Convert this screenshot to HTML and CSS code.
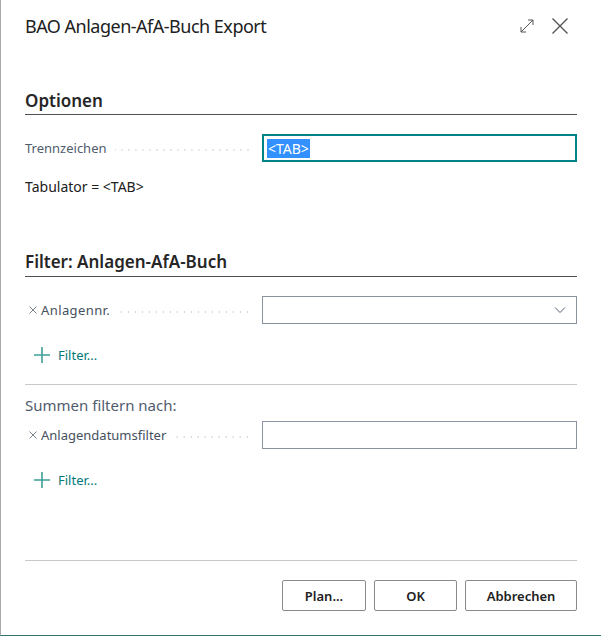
FILE: index.html
```html
<!DOCTYPE html>
<html lang="de">
<head>
<meta charset="utf-8">
<title>BAO Anlagen-AfA-Buch Export</title>
<link rel="stylesheet" href="styles.css">
</head>
<body>
<div class="dialog">
  <div class="header">
    <h1 class="title">BAO Anlagen-AfA-Buch Export</h1>
    <div class="header-actions">
      <svg class="icon-expand" width="16" height="16" viewBox="0 0 16 16">
        <path d="M2 14 L14 2 M9 2 H14 V7 M2 9 V14 H7" fill="none" stroke="#555" stroke-width="1"/>
      </svg>
      <svg class="icon-close" width="18" height="18" viewBox="0 0 18 18">
        <path d="M1.5 1.5 L16.5 16.5 M16.5 1.5 L1.5 16.5" fill="none" stroke="#555" stroke-width="1.4"/>
      </svg>
    </div>
  </div>

  <h2 class="section-heading first">Optionen</h2>
  <div class="field-row first-row">
    <div class="label"><span class="label-text">Trennzeichen</span><span class="leader"></span></div>
    <div class="input focused"><span class="selected">&lt;TAB&gt;</span></div>
  </div>
  <div class="note">Tabulator = &lt;TAB&gt;</div>

  <h2 class="section-heading second">Filter: Anlagen-AfA-Buch</h2>
  <div class="field-row first-row">
    <div class="label">
      <svg class="remove" width="8" height="8" viewBox="0 0 8 8"><path d="M0.5 0.5 L7.5 7.5 M7.5 0.5 L0.5 7.5" fill="none" stroke="#7a828c" stroke-width="1"/></svg>
      <span class="label-text dark wide">Anlagennr.</span><span class="leader"></span>
    </div>
    <div class="input">
      <svg class="chevron" width="12" height="8" viewBox="0 0 12 8"><path d="M1 1.5 L6 6.5 L11 1.5" fill="none" stroke="#505c6d" stroke-width="1"/></svg>
    </div>
  </div>
  <div class="add-filter">
    <svg class="plus" width="16" height="16" viewBox="0 0 16 16"><path d="M8 0 V16 M0 8 H16" fill="none" stroke="#3f9f9a" stroke-width="1.6"/></svg>
    <span>Filter...</span>
  </div>

  <div class="separator sep-mid"></div>
  <div class="sub-heading">Summen filtern nach:</div>
  <div class="field-row sum-row">
    <div class="label">
      <svg class="remove" width="8" height="8" viewBox="0 0 8 8"><path d="M0.5 0.5 L7.5 7.5 M7.5 0.5 L0.5 7.5" fill="none" stroke="#7a828c" stroke-width="1"/></svg>
      <span class="label-text dark">Anlagendatumsfilter</span><span class="leader"></span>
    </div>
    <div class="input"></div>
  </div>
  <div class="add-filter">
    <svg class="plus" width="16" height="16" viewBox="0 0 16 16"><path d="M8 0 V16 M0 8 H16" fill="none" stroke="#3f9f9a" stroke-width="1.6"/></svg>
    <span>Filter...</span>
  </div>

  <div class="separator sep-bottom"></div>
  <div class="footer">
    <button class="btn btn-plan">Plan...</button>
    <button class="btn btn-ok">OK</button>
    <button class="btn btn-cancel">Abbrechen</button>
  </div>
</div>
</body>
</html>
```
FILE: styles.css
```css
html, body {
  margin: 0;
  padding: 0;
  background: #ffffff;
}
body {
  font-family: "Noto Sans", "Open Sans", sans-serif;
  color: #212121;
  width: 601px;
  height: 637px;
  overflow: hidden;
}
.dialog {
  box-sizing: border-box;
  width: 601px;
  height: 636px;
  border-left: 1px solid #a7abab;
  border-bottom: 1px solid #2f7474;
  padding: 0 24px 0 24px;
  background: #ffffff;
}
.header {
  height: 52px;
  display: flex;
  align-items: center;
  justify-content: space-between;
}
.title {
  margin: 0;
  font-size: 18px;
  letter-spacing: -0.5px;
  font-weight: 400;
  line-height: 26px;
  color: #212121;
}
.header-actions {
  display: flex;
  align-items: center;
  gap: 16px;
  margin-right: 8px;
}
.icon-expand { display: block; }
.icon-close { display: block; }

.section-heading {
  margin: 0;
  font-size: 17px;
  font-weight: 600;
  line-height: 22px;
  color: #262626;
  border-bottom: 1px solid #505050;
}
.section-heading.first {
  margin-top: 38px;
  padding-bottom: 2px;
}
.section-heading.second {
  margin-top: 54px;
  padding-bottom: 3px;
}
.field-row {
  display: grid;
  grid-template-columns: 237px 1fr;
  align-items: center;
  height: 28px;
}
.first-row { margin-top: 19px; }
.sum-row { margin-top: 6px; }
.label {
  display: flex;
  align-items: center;
  font-size: 13px;
  color: #505c6d;
  padding-right: 11px;
  min-width: 0;
}
.label-text { white-space: nowrap; }
.label-text.dark { color: #45505d; }
.label-text.wide { letter-spacing: 0.4px; }
.remove {
  display: block;
  margin-left: 4px;
  margin-right: 4px;
  flex: none;
}
.leader {
  flex: 1;
  height: 2px;
  margin-left: 8px;
  margin-top: 3px;
  background-image: radial-gradient(circle, #cdd0d4 0.8px, transparent 1.1px);
  background-size: 7px 2px;
  background-repeat: repeat-x;
  background-position: right center;
}
.input {
  box-sizing: border-box;
  height: 28px;
  border: 1px solid #8a94a0;
  background: #fff;
  display: flex;
  align-items: center;
  justify-content: space-between;
  padding: 0 10px 0 4px;
}
.input.focused {
  border: 2px solid #008489;
  padding-left: 3px;
}
.selected {
  background: #3390ff;
  color: #ffffff;
  font-size: 14px;
  line-height: 19px;
  padding: 0 1px;
}
.chevron {
  margin-left: auto;
  display: block;
}
.note {
  margin-top: 15px;
  font-size: 14px;
  line-height: 20px;
  color: #212121;
}
.add-filter {
  margin-top: 21px;
  display: flex;
  align-items: center;
  gap: 8px;
  padding-left: 9px;
  height: 20px;
  font-size: 13px;
  color: #00787b;
}
.plus { display: block; }
.separator {
  height: 1px;
  background: #c8c8c8;
}
.sep-mid { margin-top: 19px; }
.sep-bottom { margin-top: 70px; }
.sub-heading {
  margin-top: 10px;
  font-size: 15px;
  line-height: 20px;
  color: #505c6d;
}
.footer {
  margin-top: 19px;
  display: flex;
  justify-content: flex-end;
  gap: 8px;
}
.btn {
  box-sizing: border-box;
  height: 31px;
  border: 1px solid #8a8a8a;
  border-radius: 2px;
  background: #ffffff;
  font-family: "Noto Sans", "Open Sans", sans-serif;
  font-size: 13px;
  font-weight: 600;
  color: #212121;
  padding: 0;
}
.btn-plan { width: 84px; }
.btn-ok { width: 83px; }
.btn-cancel { width: 112px; }
```
